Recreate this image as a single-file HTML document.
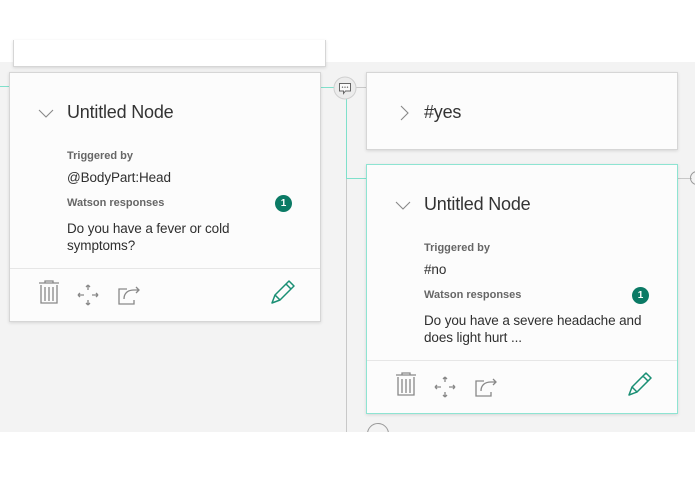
<!DOCTYPE html>
<html><head><meta charset="utf-8"><style>
*{margin:0;padding:0;box-sizing:border-box}
body{width:695px;height:494px;background:#fff;position:relative;overflow:hidden;font-family:"Liberation Sans",Arial,sans-serif;color:#3a3a3a}
.a{position:absolute}
.gray{left:0;top:62px;width:695px;height:370px;background:#f3f3f3}
.card{position:absolute;background:#fcfcfc;border:1px solid #d6d6d6;box-shadow:0 1px 3px rgba(0,0,0,.12)}
.title{position:absolute;left:57px;top:29px;font-size:18px;color:#333;letter-spacing:-0.2px}
.lbl{position:absolute;left:57px;font-size:11px;font-weight:bold;color:#666}
.val{position:absolute;left:57px;font-size:13.5px;color:#2f2f2f;line-height:17px;letter-spacing:-0.1px}
.badge{position:absolute;left:265px;width:17px;height:17px;border-radius:50%;background:#0b7a65;color:#fff;font-size:10px;font-weight:bold;text-align:center;line-height:17px}
.div{position:absolute;left:0;right:0;top:195px;border-top:1px solid #e6e6e6}
.ic{position:absolute;left:0;top:196px}
</style></head><body>
<div class="a gray"></div>
<div class="card" style="left:13px;top:40px;width:313px;height:27px;border-top:none;background:#fff"></div>
<div class="a" style="left:0;top:86px;width:10px;height:1px;background:#7fe0cb"></div>
<div class="a" style="left:320px;top:87px;width:16px;height:1px;background:#7fe0cb"></div>
<div class="a" style="left:355px;top:87px;width:12px;height:1px;background:#c8c8c8"></div>
<div class="a" style="left:346px;top:98px;width:1px;height:81px;background:#7fe0cb"></div>
<div class="a" style="left:346px;top:178px;width:21px;height:1px;background:#7fe0cb"></div>
<div class="a" style="left:346px;top:179px;width:1px;height:253px;background:#c8c8c8"></div>
<div class="a" style="left:678px;top:178px;width:14px;height:1px;background:#c8c8c8"></div>
<div class="a" style="left:690px;top:171px;width:14px;height:14px;border:1px solid #999;border-radius:50%"></div>
<svg class="a" style="left:333px;top:76px" width="24" height="24" viewBox="0 0 24 24"><circle cx="12" cy="12" r="11" fill="#ececec" stroke="#cfcfcf"/><path d="M6.5 7.5h11v7.5h-5l-2 2.5v-2.5h-4z" fill="#fafafa" stroke="#666" stroke-width="1"/><circle cx="9.5" cy="11.2" r=".7" fill="#666"/><circle cx="12" cy="11.2" r=".7" fill="#666"/><circle cx="14.5" cy="11.2" r=".7" fill="#666"/></svg>
<div class="a" style="left:367px;top:423px;width:22px;height:22px;border:1px solid #999;border-radius:50%"></div>
<div class="a" style="left:0;top:432px;width:695px;height:62px;background:#fff"></div>

<div class="card" style="left:9px;top:72px;width:312px;height:250px">
 <svg class="a" style="left:28px;top:36px" width="16" height="10"><path d="M1 1l7 7 7-7" fill="none" stroke="#888" stroke-width="1.1"/></svg>
 <div class="title">Untitled Node</div>
 <div class="lbl" style="top:77px">Triggered by</div>
 <div class="val" style="top:96px">@BodyPart:Head</div>
 <div class="lbl" style="top:124px">Watson responses</div>
 <div class="badge" style="top:122px">1</div>
 <div class="val" style="top:147px">Do you have a fever or cold<br>symptoms?</div>
 <div class="div"></div>
 <svg class="ic" width="310" height="52"><g fill="none" stroke="#888" stroke-width="1.3">
  <path d="M29 14h20M35 14v-2h8v2M31 16v18h16V16M35 18v14M39 18v14M43 18v14"/>
  <path d="M68 26h6M82 26h6M78 16v5M78 31v5M68 26l2-2M68 26l2 2M88 26l-2-2M88 26l-2 2M78 16l-2 2M78 16l2 2M78 36l-2-2M78 36l2-2"/>
  <path d="M113 20h-4v15h15v-4M114 30c0-6 4-9 10-9h5M126 18l3 3-3 3M113 20h4"/></g>
  <path d="M262 34l3-8 14-14 5 5-14 14zM265 26l5 5M276 15l5 5" fill="none" stroke="#1a8f74" stroke-width="1.5" stroke-linejoin="round"/>
 </svg>
</div>

<div class="card" style="left:366px;top:72px;width:312px;height:78px">
 <svg class="a" style="left:33px;top:32px" width="10" height="16"><path d="M1 1l7 7-7 7" fill="none" stroke="#888" stroke-width="1.1"/></svg>
 <div class="title" style="top:29px">#yes</div>
</div>

<div class="card" style="left:366px;top:164px;width:312px;height:250px;border-color:#8ee4d2">
 <svg class="a" style="left:28px;top:36px" width="16" height="10"><path d="M1 1l7 7 7-7" fill="none" stroke="#888" stroke-width="1.1"/></svg>
 <div class="title">Untitled Node</div>
 <div class="lbl" style="top:77px">Triggered by</div>
 <div class="val" style="top:96px">#no</div>
 <div class="lbl" style="top:124px">Watson responses</div>
 <div class="badge" style="top:122px">1</div>
 <div class="val" style="top:147px">Do you have a severe headache and<br>does light hurt ...</div>
 <div class="div"></div>
 <svg class="ic" width="310" height="52"><g fill="none" stroke="#888" stroke-width="1.3">
  <path d="M29 14h20M35 14v-2h8v2M31 16v18h16V16M35 18v14M39 18v14M43 18v14"/>
  <path d="M68 26h6M82 26h6M78 16v5M78 31v5M68 26l2-2M68 26l2 2M88 26l-2-2M88 26l-2 2M78 16l-2 2M78 16l2 2M78 36l-2-2M78 36l2-2"/>
  <path d="M113 20h-4v15h15v-4M114 30c0-6 4-9 10-9h5M126 18l3 3-3 3M113 20h4"/></g>
  <path d="M262 34l3-8 14-14 5 5-14 14zM265 26l5 5M276 15l5 5" fill="none" stroke="#1a8f74" stroke-width="1.5" stroke-linejoin="round"/>
 </svg>
</div>
</body></html>
